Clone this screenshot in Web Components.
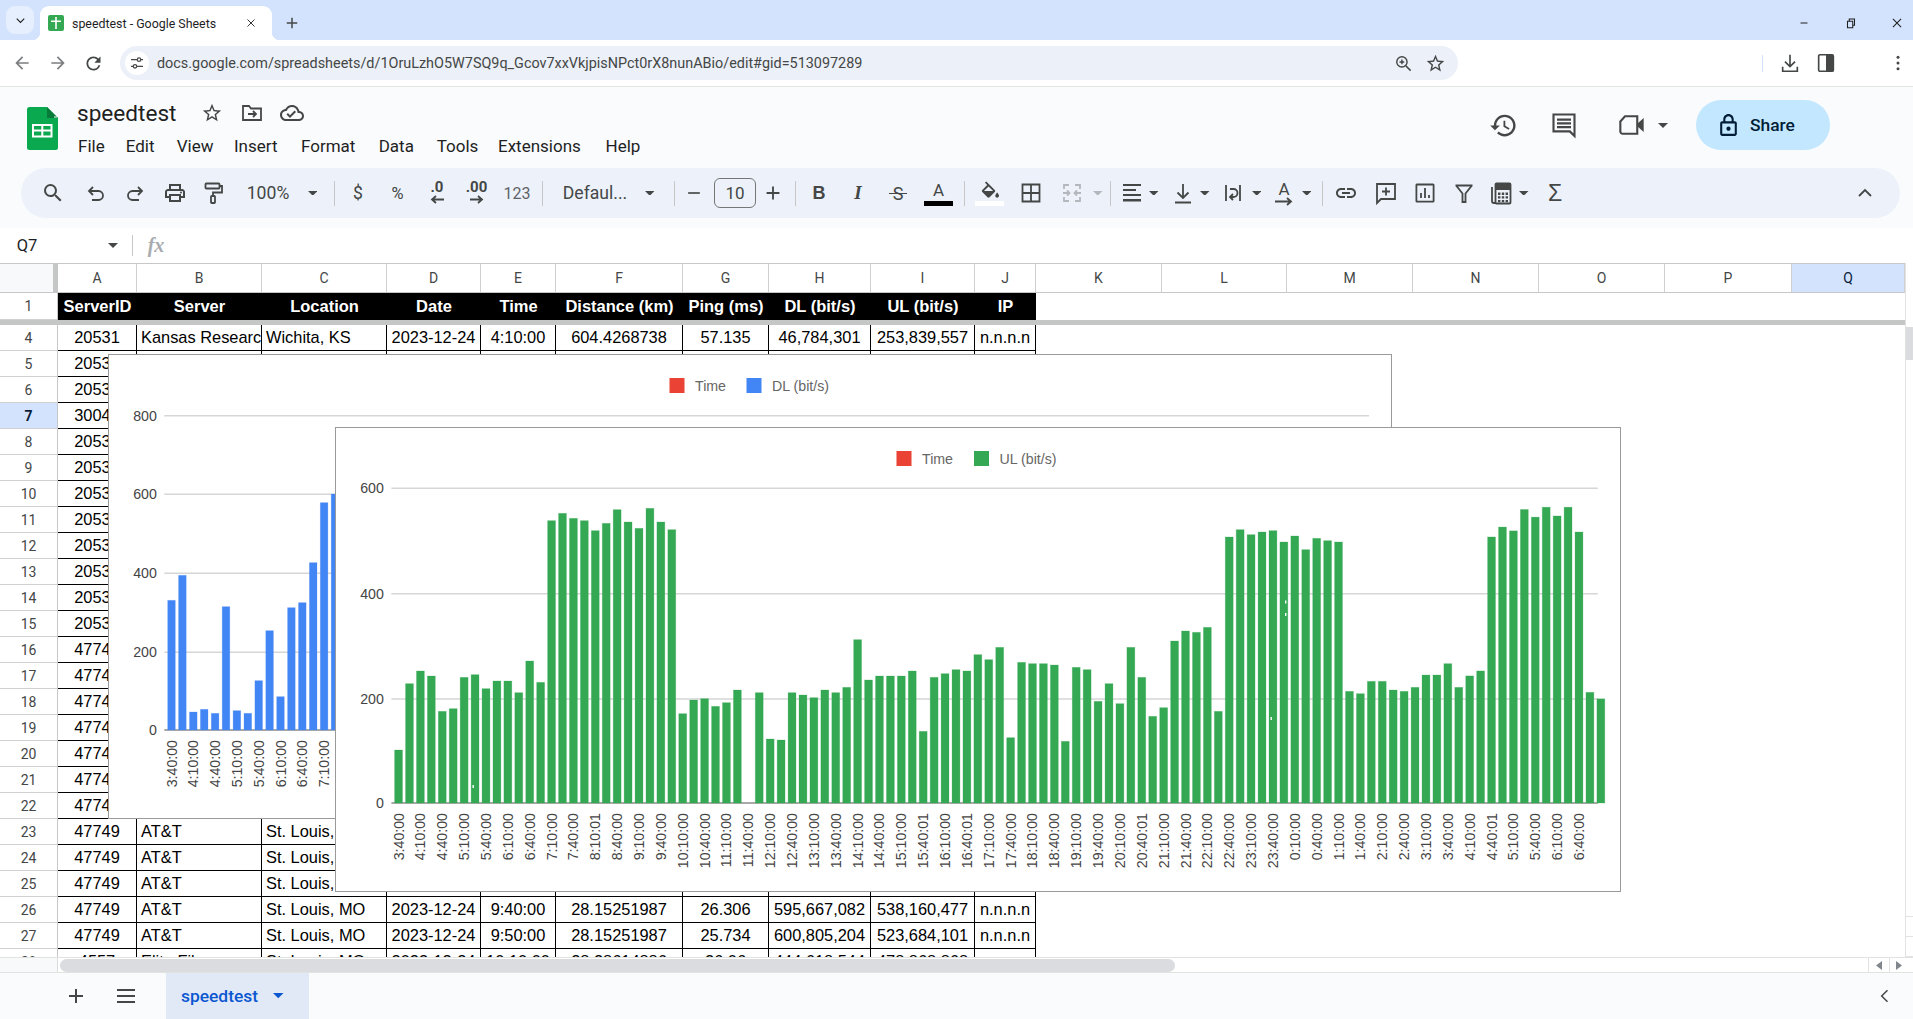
<!DOCTYPE html>
<html>
<head>
<meta charset="utf-8">
<title>speedtest - Google Sheets</title>
<style>
	html, body { margin: 0; height: 100%; overflow: hidden; background: #fff; }
	body { display: flex; flex-direction: column; width: 1913px; height: 1019px; font-family: Roboto, "Liberation Sans", sans-serif; }
	#dl { left: 108px; top: 91px; width: 1284px; height: 465px; }
	#ul { left: 335px; top: 164px; width: 1286px; height: 465px; }
</style>
</head>
<body>
<browser-chrome></browser-chrome>
<sheet-header></sheet-header>
<formula-bar></formula-bar>
<sheet-grid>
	<bar-chart id="dl"></bar-chart>
	<bar-chart id="ul"></bar-chart>
</sheet-grid>
<sheet-tabs></sheet-tabs>

<script>
const st = 'fill="none" stroke="currentColor" stroke-width="1.8"'
const ICONS = {
	search: `<path d="M15.5 14h-.79l-.28-.27A6.47 6.47 0 0 0 16 9.5 6.5 6.5 0 1 0 9.5 16c1.61 0 3.09-.59 4.23-1.57l.27.28v.79l5 4.99L20.49 19l-4.99-5zm-6 0C7.01 14 5 11.99 5 9.5S7.01 5 9.5 5 14 7.01 14 9.5 11.99 14 9.5 14z"/>`,
	undo: `<path ${st} d="M9 6 5 10l4 4M5 10h9.5a4.5 4.5 0 0 1 0 9H8"/>`,
	redo: `<path ${st} d="M15 6l4 4-4 4M19 10H9.5a4.5 4.5 0 0 0 0 9H16"/>`,
	print: `<path d="M19 8h-1V3H6v5H5c-1.66 0-3 1.34-3 3v6h4v4h12v-4h4v-6c0-1.66-1.34-3-3-3zM8 5h8v3H8V5zm8 12v2H8v-4h8v2zm2-2v-2H6v2H4v-4c0-.55.45-1 1-1h14c.55 0 1 .45 1 1v4h-2z"/><circle cx="18" cy="11.5" r="1"/>`,
	paint: `<g ${st}><rect x="4.5" y="2.5" width="14" height="5" rx=".8"/><path d="M18.5 5h2.5v6.5h-9V15"/><rect x="10" y="15" width="4" height="7" rx=".8"/></g>`,
	fill: `<path d="M16.56 8.94 7.62 0 6.21 1.41l2.38 2.38-5.15 5.15c-.59.59-.59 1.54 0 2.12l5.5 5.5c.29.29.68.44 1.06.44s.77-.15 1.06-.44l5.5-5.5c.59-.58.59-1.53 0-2.12zM5.21 10 10 5.21 14.79 10H5.21zM19 11.5s-2 2.17-2 3.5c0 1.1.9 2 2 2s2-.9 2-2c0-1.33-2-3.5-2-3.5z"/>`,
	borders: `<path ${st} d="M3.5 3.5h17v17h-17zM12 3.5v17M3.5 12h17"/>`,
	merge: `<path ${st} d="M9 4H4v4M15 4h5v4M9 20H4v-4M15 20h5v-4M3 12h6M7 9.5 9.5 12 7 14.5M21 12h-6M17 9.5 14.5 12 17 14.5"/>`,
	align: `<path d="M3 3h18v2H3zM3 8h13v2H3zM3 13h18v2H3zM3 18h18v2.4H3z"/>`,
	valign: `<path ${st} d="M12 3v14M6.5 11.5 12 17l5.5-5.5M4 21.5h16"/>`,
	wrap: `<path ${st} d="M5 4v16M19 4v16M9 8h3.5a4 4 0 0 1 0 8H9.5M12 13l-3 3 3 3"/>`,
	link: `<path d="M3.9 12c0-1.71 1.39-3.1 3.1-3.1h4V7H7c-2.76 0-5 2.24-5 5s2.24 5 5 5h4v-1.9H7c-1.71 0-3.1-1.39-3.1-3.1zM8 13h8v-2H8v2zm9-6h-4v1.9h4c1.71 0 3.1 1.39 3.1 3.1s-1.39 3.1-3.1 3.1h-4V17h4c2.76 0 5-2.24 5-5s-2.24-5-5-5z"/>`,
	comment: `<path ${st} d="M3 3h18v15H7l-4 4zM12 6.5v8M8 10.5h8"/>`,
	chart: `<path ${st} d="M4 3.5h16a.6.6 0 0 1 .6.6v16a.6.6 0 0 1-.6.6H4a.6.6 0 0 1-.6-.6V4a.6.6 0 0 1 .6-.5zM8 17v-5M12 17V7M16 17v-3"/>`,
	filter: `<path ${st} d="M3.5 4.5h17M4.5 5l6 7.5V21h3v-8.5l6-7.5"/>`,
	calc: `<path ${st} d="M3 6v14a2 2 0 0 0 2 2h1"/><rect ${st} x="6.5" y="2.5" width="15" height="20" rx="1"/><path d="M6.5 2.5h15V9h-15zM9 11.5h2.4v2.4H9zM12.8 11.5h2.4v2.4h-2.4zM16.6 11.5H19v2.4h-2.4zM9 15.2h2.4v2.4H9zM12.8 15.2h2.4v2.4h-2.4zM16.6 15.2H19v2.4h-2.4zM9 18.9h2.4v2.4H9zM12.8 18.9h2.4v2.4h-2.4zM16.6 18.9H19v2.4h-2.4z"/>`,
	star: `<path d="M22 9.24l-7.19-.62L12 2 9.19 8.63 2 9.24l5.46 4.73L5.82 21 12 17.27 18.18 21l-1.63-7.03L22 9.24zM12 15.4l-3.76 2.27 1-4.28-3.32-2.88 4.38-.38L12 6.1l1.71 4.04 4.38.38-3.32 2.88 1 4.28L12 15.4z"/>`,
	folder: `<path ${st} d="M3 5h6l2 2.5h10V19H3zM8 13h8M13 10l3 3-3 3"/>`,
	cloud: `<path d="M19.35 10.04C18.67 6.59 15.64 4 12 4 9.11 4 6.6 5.64 5.35 8.04 2.34 8.36 0 10.91 0 14c0 3.31 2.69 6 6 6h13c2.76 0 5-2.24 5-5 0-2.64-2.05-4.78-4.65-4.96zM19 18H6c-2.21 0-4-1.79-4-4 0-2.05 1.53-3.76 3.56-3.97l1.07-.11.5-.95C8.08 7.14 9.94 6 12 6c2.62 0 4.88 1.86 5.39 4.43l.3 1.5 1.53.11c1.56.1 2.78 1.41 2.78 2.96 0 1.65-1.35 3-3 3zm-9-3.82l-2.09-2.09L6.5 13.5 10 17l6.01-6.01-1.41-1.41z"/>`,
	history: `<path d="M13 3c-4.97 0-9 4.03-9 9H1l3.89 3.89.07.14L9 12H6c0-3.87 3.13-7 7-7s7 3.13 7 7-3.13 7-7 7c-1.93 0-3.68-.79-4.94-2.06l-1.42 1.42C8.27 19.99 10.51 21 13 21c4.97 0 9-4.03 9-9s-4.03-9-9-9zm-1 5v5l4.28 2.54.72-1.21-3.5-2.08V8H12z"/>`,
	chat: `<path ${st} stroke-width="2" d="M3 3h18v18.5L17 17.5H3z"/><path d="M6 6.5h12v1.8H6zM6 9.7h12v1.8H6zM6 12.9h12v1.8H6z"/>`,
	meet: `<path ${st} stroke-width="2.2" d="M2 9l4-4.5h10.5V19.5H4a2 2 0 0 1-2-2z"/><path d="M17 10.5 22 6v12l-5-4.5z"/>`,
	lock: `<path d="M18 8h-1V6c0-2.76-2.24-5-5-5S7 3.24 7 6v2H6c-1.1 0-2 .9-2 2v10c0 1.1.9 2 2 2h12c1.1 0 2-.9 2-2V10c0-1.1-.9-2-2-2zM9 6c0-1.66 1.34-3 3-3s3 1.34 3 3v2H9V6zm9 14H6V10h12v10zm-6-3c1.1 0 2-.9 2-2s-.9-2-2-2-2 .9-2 2 .9 2 2 2z"/>`,
	back: `<path d="M20 11H7.83l5.59-5.59L12 4l-8 8 8 8 1.41-1.41L7.83 13H20v-2z"/>`,
	forward: `<path d="M4 11h12.17l-5.59-5.59L12 4l8 8-8 8-1.41-1.41L16.17 13H4v-2z"/>`,
	reload: `<path d="M17.65 6.35A7.958 7.958 0 0 0 12 4c-4.42 0-7.99 3.58-7.99 8s3.57 8 7.99 8c3.73 0 6.84-2.55 7.73-6h-2.08A5.99 5.99 0 0 1 12 18c-3.31 0-6-2.69-6-6s2.69-6 6-6c1.66 0 3.14.69 4.22 1.78L13 11h7V4l-2.35 2.35z"/>`,
	tune: `<path ${st} d="M3 7h9M18 7h3M3 17h3M12 17h9"/><circle ${st} cx="15" cy="7" r="2.6"/><circle ${st} cx="9" cy="17" r="2.6"/>`,
	zoom: `<path ${st} stroke-width="2" d="M15 15l6 6"/><circle ${st} stroke-width="2" cx="10" cy="10" r="6.5"/><path ${st} stroke-width="1.6" d="M10 7v6M7 10h6"/>`,
	download: `<path ${st} stroke-width="2" d="M12 3v13M6.5 10.5 12 16l5.5-5.5M4 16v5h16v-5"/>`,
	panel: `<rect ${st} stroke-width="2" x="4" y="3" width="16" height="18" rx="1.5"/><path d="M12 3h8v18h-8z"/>`,
	dots: `<circle cx="12" cy="5" r="1.8"/><circle cx="12" cy="12" r="1.8"/><circle cx="12" cy="19" r="1.8"/>`,
	plus: `<path d="M19 13h-6v6h-2v-6H5v-2h6V5h2v6h6v2z"/>`,
	minus: `<path d="M5 11h14v2H5z"/>`,
	menu: `<path d="M3 5h18v2H3zM3 11h18v2H3zM3 17h18v2H3z"/>`,
	chevup: `<path ${st} stroke-width="2" d="M6 15l6-6 6 6"/>`,
	chevleft: `<path ${st} stroke-width="2.4" d="M15 5l-7 7 7 7"/>`,
	chevdown: `<path ${st} stroke-width="2.4" d="M6 9l6 6 6-6"/>`,
	x: `<path ${st} stroke-width="2" d="M5 5l14 14M19 5 5 19"/>`,
	restore: `<path ${st} stroke-width="1.6" d="M6 9h9v11H6zM9 9V5h9v11h-3"/>`,
	larr: `<path d="M12 2v2H3.8l3 3L5.4 8.4 0 3 5.4-2.4" transform="translate(2 2)"/>`
}
const ic = (name, size = 24, extra = '') => `<svg width="${size}" height="${size}" viewBox="0 0 24 24" fill="currentColor" ${extra}>${ICONS[name]}</svg>`
const drop = (w = 10, color = 'currentColor') => `<svg width="${w}" height="${w / 2}" viewBox="0 0 10 5" fill="${color}"><path d="M0 0h10L5 5z"/></svg>`

// items are [centre x, width, html, class], laid out as a flex row of slots
function place(items, origin = 0) {
	let cur = origin
	return items.map(([c, w, html = '', cls = '']) => {
		const l = c - w / 2
		const m = l - cur
		cur = l + w
		return `<span class="slot ${cls}" style="margin-left:${m}px;width:${w}px">${html}</span>`
	}).join('')
}
const slotCss = `
	.slot { flex: none; display: flex; align-items: center; justify-content: center; white-space: nowrap; }
	svg { display: block; flex: none; }
`

class BrowserChrome extends HTMLElement {
	constructor() {
		super()
		this.attachShadow({mode: 'open'})
		this.shadowRoot.innerHTML = `
		<style>
			:host { display: block; flex: none; font-family: Roboto, "Liberation Sans", sans-serif; }
			${slotCss}
			#strip { height: 40px; background: #d3e3fd; display: flex; }
			#strip .slot { height: 34px; margin-top: 6px; color: #1f1f1f; }
			#strip .list { height: 28px; background: #e6effd; border-radius: 9px; }
			#strip .tab { background: #fff; border-radius: 9px 9px 0 0; justify-content: flex-start; position: relative; font-size: 12.4px; }
			.tab::before, .tab::after { content: ''; position: absolute; bottom: 0; width: 8px; height: 8px; background: radial-gradient(circle at 0 0, transparent 8px, #fff 8.5px); }
			.tab::before { left: -8px; }
			.tab::after { right: -8px; background: radial-gradient(circle at 100% 0, transparent 8px, #fff 8.5px); }
			#title { margin-left: 8px; width: 173px; overflow: hidden; }
			#x { color: #1f1f1f; }
			#bar { height: 46px; background: #fff; border-bottom: 1px solid #e0e3df; display: flex; align-items: flex-start; }
			#bar .slot { height: 34px; margin-top: 6px; color: #444746; }
			#bar .back, #bar .forward { color: #7c7e80; }
			#omni { background: #ecf0f8; border-radius: 17px; justify-content: flex-start; }
			#site { width: 24px; height: 24px; border-radius: 50%; background: #fff; margin-left: 5px; display: flex; align-items: center; justify-content: center; color: #444746; flex: none; }
			#url { margin-left: 8px; font-size: 14.4px; color: #444746; }
			#omni .end { margin-left: auto; display: flex; align-items: center; gap: 12px; margin-right: 12px; color: #444746; }
			#bar .sep { height: 17px; margin-top: 15px; background: #d3e3fd; }
		</style>
		<div id="strip">
			${place([
				[20, 28, ic('chevdown', 15), 'list'],
				[156, 232, `<svg width="16" height="16" viewBox="0 0 16 16" style="margin-left:8px"><rect width="16" height="16" rx="2" fill="#34a853"/><path d="M7.2 2h1.6v12H7.2zM3 5.5h10v1.5H3z" fill="#fff"/></svg><span id="title">speedtest - Google Sheets</span><span id="x">${ic('x', 12)}</span>`, 'tab'],
				[292, 20, ic('plus', 18, 'style="color:#444746"')],
				[1804, 16, ic('minus', 12)],
				[1850.5, 16, ic('restore', 14)],
				[1896.5, 16, ic('x', 14)]
			])}
		</div>
		<div id="bar">
			${place([
				[21.5, 30, ic('back', 20), 'back'],
				[58, 30, ic('forward', 20), 'forward'],
				[93.7, 30, ic('reload', 21)],
				[789, 1338, `<span id="site">${ic('tune', 16)}</span><span id="url">docs.google.com/spreadsheets/d/1OruLzhO5W7SQ9q_Gcov7xxVkjpisNPct0rX8nunABio/edit#gid=513097289</span><span class="end">${ic('zoom', 19)}${ic('star', 21)}</span>`, ''],
				[1762.5, 1, '', 'sep'],
				[1790, 26, ic('download', 22)],
				[1826.5, 26, ic('panel', 22)],
				[1898, 26, ic('dots', 20)]
			])}
		</div>`
		this.shadowRoot.querySelectorAll('#bar .slot')[3].id = 'omni'
	}
}
customElements.define('browser-chrome', BrowserChrome)

class SheetToolbar extends HTMLElement {
	constructor() {
		super()
		this.attachShadow({mode: 'open'})
		const sep = c => [c, 1, '', 'sep']
		const dropAt = c => [c, 12, drop(9.5)]
		const under = (color, inner) => `<span class="col">${inner}<i class="bar" style="background:${color}"></i></span>`
		const dec = (t, d) => `<span class="dec"><span>${t}</span><svg width="15" height="9" viewBox="0 0 15 9" fill="none" stroke="currentColor" stroke-width="1.8"><path d="${d}"/></svg></span>`
		this.shadowRoot.innerHTML = `
		<style>
			:host { display: flex; align-items: center; height: 50px; margin: 0 13px 10px 21px; background: #edf2fa; border-radius: 25px; color: #444746; font-size: 17.6px; flex: none; }
			${slotCss}
			.slot { height: 50px; }
			.sep { height: 25px; background: #c7c7c7; }
			.off { color: #b4b8bc; }
			.num { font-size: 16px; color: #5f6368; }
			.box { height: 30px !important; border: 1px solid #747775; border-radius: 6px; box-sizing: border-box; font-size: 17px; }
			.col { display: flex; flex-direction: column; align-items: center; }
			.a { font-size: 17px; line-height: 18px; margin-bottom: 2px; }
			.bar { display: block; width: 29px; height: 5px; }
			.dec { display: flex; flex-direction: column; align-items: center; font-weight: 700; font-size: 15px; line-height: 15px; margin-top: -2px; }
			.b { font-weight: 700; font-size: 18px; font-family: "Liberation Sans", sans-serif; }
			.i { font-weight: 700; font-style: italic; font-size: 19px; font-family: "Liberation Serif", serif; }
			.s { position: relative; font-size: 18px; }
			.s::after { content: ''; position: absolute; left: -4px; right: -4px; top: 10px; height: 1.6px; background: #444746; }
			.sig { font-size: 23px; font-family: "Liberation Sans", sans-serif; }
			.rot { font-size: 17px; line-height: 16px; }
		</style>
		${place([
			[53, 26, ic('search')],
			[96, 26, ic('undo')],
			[135, 26, ic('redo')],
			[175, 26, ic('print')],
			[213, 26, ic('paint')],
			[268, 50, '100%'],
			dropAt(312.5),
			sep(334),
			[358, 16, '$'],
			[397.5, 20, '<span style="font-size:16.5px">%</span>'],
			[437, 24, dec('.0', 'M14 4.5H2M6 1 2 4.5 6 8')],
			[476.5, 28, dec('.00', 'M1 4.5h12M9 1l4 3.5L9 8')],
			[517, 30, '123', 'num'],
			sep(542.5),
			[595, 68, 'Defaul...'],
			dropAt(650),
			sep(674),
			[694, 22, ic('minus', 20)],
			[735, 42, '10', 'box'],
			[773, 22, ic('plus', 22)],
			sep(795),
			[819, 22, '<span class="b">B</span>'],
			[858, 22, '<span class="i">I</span>'],
			[898, 26, '<span class="s">S</span>'],
			[938.5, 30, under('#000', '<span class="a">A</span>')],
			sep(964),
			[989.5, 30, under('#fff', `<svg width="21" height="18" viewBox="0 0 22 18" fill="currentColor" style="margin-bottom:2px">${ICONS.fill}</svg>`)],
			[1030.5, 24, ic('borders')],
			[1071.5, 24, ic('merge'), 'off'],
			[1098, 12, drop(9.5), 'off'],
			sep(1110),
			[1132, 24, ic('align')],
			dropAt(1154),
			[1182.5, 24, ic('valign')],
			dropAt(1205),
			[1233, 24, ic('wrap')],
			dropAt(1256.5),
			[1284, 24, `<span class="col"><span class="rot">A</span><svg width="20" height="9" viewBox="0 0 20 9" fill="none" stroke="currentColor" stroke-width="1.8"><path d="M1 4.5h16M13 1l4 3.5L13 8"/></svg></span>`],
			dropAt(1306.5),
			sep(1322.5),
			[1346, 24, ic('link')],
			[1385.5, 24, ic('comment')],
			[1425, 24, ic('chart')],
			[1464, 24, ic('filter')],
			[1501, 24, ic('calc')],
			dropAt(1524),
			[1555, 22, '<span class="sig">Σ</span>'],
			[1865, 26, ic('chevup')]
		], 21)}`
	}
}
customElements.define('sheet-toolbar', SheetToolbar)

class SheetHeader extends HTMLElement {
	constructor() {
		super()
		this.attachShadow({mode: 'open'})
		const menu = [['File', 47.7], ['Edit', 51], ['View', 57.3], ['Insert', 67], ['Format', 77.7], ['Data', 58], ['Tools', 61.3], ['Extensions', 107.6], ['Help', 50]]
		this.shadowRoot.innerHTML = `
		<style>
			:host { display: block; flex: none; height: 141px; background: #f9fbfd; color: #444746; font-family: Roboto, "Liberation Sans", sans-serif; }
			${slotCss}
			#top { height: 81px; display: flex; }
			#logo { flex: none; margin: 20px 19px 0 27px; }
			#names { flex: none; width: 720px; }
			#title { display: flex; align-items: center; height: 32px; margin-top: 10px; }
			#name { font-size: 22.6px; color: #1f1f1f; width: 102px; margin-right: 0; }
			#title .slot { height: 32px; }
			#menu { display: flex; margin-left: 1px; height: 24px; line-height: 24px; margin-top: 5px; font-size: 17px; color: #1f1f1f; }
			#menu span { flex: none; }
			#right { display: flex; align-items: flex-start; flex: none; }
			#right .slot { height: 50px; margin-top: 13px; }
			#share { background: #c2e7ff; color: #001d35; border-radius: 25px; justify-content: flex-start !important; font-size: 17.4px; font-weight: 500; gap: 9px; padding-left: 20px; box-sizing: border-box; }
		</style>
		<div id="top">
			<svg id="logo" width="31" height="43" viewBox="0 0 31 43"><path d="M2.5 0H20l11 11v29.5a2.5 2.5 0 0 1-2.5 2.5h-26A2.5 2.5 0 0 1 0 40.5v-38A2.5 2.5 0 0 1 2.5 0z" fill="#0aa84f"/><path d="M20 0l11 11H20z" fill="#087a3a"/><path d="M27 9.5h3v1h-3z" fill="#fff"/><path d="M5 17h20.5v13.5H5zM7 19v3.6h7.3V19zm9.3 0v3.6h7.2V19zM7 24.6v3.9h7.3v-3.9zm9.3 0v3.9h7.2v-3.9z" fill="#fff" fill-rule="evenodd"/></svg>
			<div id="names">
				<div id="title">
					<span id="name">speedtest</span>
					${place([[212, 24, ic('star', 22)], [252, 24, ic('folder', 24)], [292, 24, ic('cloud', 24)]], 178.7)}
				</div>
				<div id="menu">${menu.map(([t, w]) => `<span style="width:${w}px">${t}</span>`).join('')}</div>
			</div>
			<div id="right">
				${place([
					[1503, 30, ic('history', 29)],
					[1564, 30, ic('chat', 28)],
					[1632, 30, ic('meet', 28)],
					[1662.5, 12, drop(10)],
					[1763, 134, `${ic('lock', 25)}<span>Share</span>`, 'share']
				], 797)}
			</div>
		</div>
		<sheet-toolbar></sheet-toolbar>`
		this.shadowRoot.querySelector('.share').id = 'share'
	}
}
customElements.define('sheet-header', SheetHeader)

class FormulaBar extends HTMLElement {
	constructor() {
		super()
		this.attachShadow({mode: 'open'})
		this.shadowRoot.innerHTML = `
		<style>
			:host { display: flex; flex: none; height: 35px; align-items: center; background: #fff; font-family: Roboto, "Liberation Sans", sans-serif; color: #1f1f1f; }
			${slotCss}
			.sep { height: 21px; background: #c7c7c7; }
			#ref { font-size: 16.5px; }
			#fx { font-family: "Liberation Serif", serif; font-style: italic; font-weight: 700; font-size: 20px; color: #a9acaf; }
		</style>
		${place([
			[27, 20, '<span id="ref">Q7</span>'],
			[112.5, 12, drop(10, '#444746')],
			[132, 1, '', 'sep'],
			[156, 24, '<span id="fx">fx</span>']
		])}`
	}
}
customElements.define('formula-bar', FormulaBar)

const colEdges = [58, 137, 262, 387, 481, 556, 683, 769, 871, 975, 1036, 1162, 1287, 1413, 1539, 1665, 1792, 1905]
const colNames = 'ABCDEFGHIJKLMNOPQ'.split('')
const heads = ['ServerID', 'Server', 'Location', 'Date', 'Time', 'Distance (km)', 'Ping (ms)', 'DL (bit/s)', 'UL (bit/s)', 'IP']
const stl = ['47749', 'AT&T', 'St. Louis, MO']
const rows = {
	4: ['20531', 'Kansas Research', 'Wichita, KS', '2023-12-24', '4:10:00', '604.4268738', '57.135', '46,784,301', '253,839,557', 'n.n.n.n'],
	7: ['30041'],
	23: stl, 24: stl, 25: stl,
	26: [...stl, '2023-12-24', '9:40:00', '28.15251987', '26.306', '595,667,082', '538,160,477', 'n.n.n.n'],
	27: [...stl, '2023-12-24', '9:50:00', '28.15251987', '25.734', '600,805,204', '523,684,101', 'n.n.n.n'],
	28: ['4557', 'Elite Fiber', 'St. Louis, MO', '2023-12-24', '10:10:00', '28.28614886', '26.06', '444,618,544', '478,868,868', '']
}
for (let r = 5; r <= 22; r++) if (!rows[r]) rows[r] = [(r < 16 ? '20531' : '47749')]

class SheetGrid extends HTMLElement {
	constructor() {
		super()
		this.attachShadow({mode: 'open'})
		const widths = colEdges.map((e, i) => i ? e - colEdges[i - 1] : e)
		let html = `<div class="corner"></div>`
		colNames.forEach((c, i) => html += `<div class="colh ${c == 'Q' ? 'sel' : ''}">${c}</div>`)
		html += `<div class="rowh">1</div>`
		colNames.forEach((c, i) => html += i < 10 ? `<div class="hd">${heads[i]}</div>` : `<div></div>`)
		html += `<div class="freeze"></div>`
		for (let r = 4; r <= 28; r++) {
			html += `<div class="rowh ${r == 7 ? 'sel' : ''}">${r}</div>`
			colNames.forEach((c, i) => {
				if (i >= 10) { html += `<div></div>`; return }
				html += `<div class="cell ${i == 1 || i == 2 ? 'left' : ''}">${(rows[r][i] || '').replace('&', '&amp;')}</div>`
			})
		}
		this.shadowRoot.innerHTML = `
		<style>
			:host { display: block; flex: none; height: 710px; position: relative; background: #fff; }
			#main { display: flex; height: 694px; }
			#view { position: relative; width: 1905px; height: 694px; overflow: hidden; flex: none; }
			#table { display: grid; grid-template-columns: ${widths.map(w => w + 'px').join(' ')}; grid-template-rows: 30px 27px 5px repeat(25, 26px); font-family: "Liberation Sans", Arial, sans-serif; font-size: 16.4px; color: #000; }
			#table > div { box-sizing: border-box; min-width: 0; overflow: hidden; white-space: nowrap; }
			.corner { background: #f8f9fa; border-top: 1px solid #c7c7c7; border-bottom: 1px solid #c7c7c7; border-right: 5px solid #c4c7c5; }
			.colh, .rowh { font-family: Roboto, sans-serif; font-size: 14px; color: #444746; display: flex; align-items: center; justify-content: center; }
			.colh { border-top: 1px solid #c7c7c7; border-bottom: 1px solid #c7c7c7; border-right: 1px solid #d0d0d0; background: #fff; }
			.rowh { border-bottom: 1px solid #d0d0d0; border-right: 1px solid #c7c7c7; background: #fff; }
			.sel { background: #d3e3fd !important; color: #0b1d3a; }
			.rowh.sel { font-weight: 700; }
			.hd { background: #000; color: #fff; font-weight: 700; text-align: center; line-height: 26px; font-size: 16.5px; }
			.freeze { grid-column: 1 / -1; background: #c4c7c5; }
			.cell { border-right: 1px solid #000; border-bottom: 1px solid #000; text-align: center; line-height: 25px; padding: 0 1px; }
			.left { text-align: left; padding-left: 4px; }
			.rowh + .cell { border-left: 0; }
			#vbar { flex: none; width: 8px; border-left: 1px solid #e1e3e1; box-sizing: border-box; display: flex; flex-direction: column; background: #fff; }
			#vthumb { margin-top: 64px; height: 33px; background: #dadce0; }
			#vends { margin-top: auto; height: 40px; border-top: 1px solid #e1e3e1; display: flex; flex-direction: column; }
			#vends span { flex: 1; border-bottom: 1px solid #e1e3e1; position: relative; overflow: hidden; }
			#hbar { height: 16px; box-sizing: border-box; border-top: 1px solid #e1e3e1; border-bottom: 1px solid #e1e3e1; display: flex; align-items: center; background: #fff; }
			#hcorner { flex: none; width: 58px; height: 100%; background: #f8f9fa; border-right: 1px solid #dcdcdc; box-sizing: border-box; }
			#hthumb { flex: none; margin-left: 2px; width: 1115px; height: 13px; background: #dadce0; border-radius: 7px; }
			#harrows { margin-left: auto; display: flex; height: 100%; margin-right: 0; color: #80868b; }
			#harrows span { width: 20px; display: flex; align-items: center; justify-content: center; border-left: 1px solid #e1e3e1; }
			#harrows span:last-child { width: 24px; justify-content: flex-start; padding-left: 6px; box-sizing: border-box; }
		</style>
		<div id="main">
			<div id="view">
				<div id="table">${html}</div>
				<slot></slot>
			</div>
			<div id="vbar"><div id="vthumb"></div><div id="vends"><span></span><span></span></div></div>
		</div>
		<div id="hbar">
			<div id="hcorner"></div><div id="hthumb"></div>
			<div id="harrows">
				<span><svg width="6" height="9" viewBox="0 0 6 9" fill="currentColor"><path d="M6 0v9L0 4.5z"/></svg></span>
				<span><svg width="6" height="9" viewBox="0 0 6 9" fill="currentColor"><path d="M0 0v9l6-4.5z"/></svg></span>
			</div>
		</div>`
	}
}
customElements.define('sheet-grid', SheetGrid)

class BarChart extends HTMLElement {
	constructor() {
		super()
		this.attachShadow({mode: 'open'})
	}

	// everything in the config is in page pixels, the viewBox does the shifting
	set config(c) {
		const r = this.getBoundingClientRect()
		const ox = c.left, oy = c.top
		let s = ''
		c.grid.forEach(([y, label]) => {
			s += `<line x1="${c.plotLeft}" x2="${c.plotRight}" y1="${y}" y2="${y}" stroke="${label == '0' ? '#555' : '#d6d6d6'}" stroke-width="${label == '0' ? 1.2 : 1.6}"/>`
			s += `<text x="${c.plotLeft - 7.5}" y="${y}" text-anchor="end" dominant-baseline="central" fill="#444">${label}</text>`
		})
		c.heights.forEach((h, i) => {
			if (h < 1) return
			const x = c.firstBar + i * c.step
			s += `<rect x="${x}" y="${c.zero - h}" width="${c.barWidth}" height="${h}" fill="${c.color}" stroke="${c.color}" stroke-opacity=".3" stroke-width=".8"/>`
		})
		c.labels.forEach((t, i) => {
			const x = c.firstBar + c.barWidth / 2 + i * 2 * c.step
			s += `<text x="${x}" y="${c.labelTop}" text-anchor="end" dominant-baseline="central" fill="#444" transform="rotate(-90 ${x} ${c.labelTop})">${t}</text>`
		})
		c.legend.forEach(([x, color, t]) => {
			s += `<rect x="${x}" y="${c.legendY - 7.5}" width="15" height="15" fill="${color}"/>`
			s += `<text x="${x + 25.5}" y="${c.legendY}" dominant-baseline="central" fill="#666">${t}</text>`
		})
		;(c.specks || []).forEach(([x, y]) => s += `<rect x="${x}" y="${y}" width="1.4" height="3" fill="#fff"/>`)
		this.shadowRoot.innerHTML = `
		<style>
			:host { display: block; position: absolute; background: #fff; border: 1px solid #9a9a9a; box-sizing: border-box; overflow: hidden; }
			svg { display: block; font: 14.2px "Liberation Sans", Arial, sans-serif; }
		</style>
		<svg width="${c.width}" height="${c.height}" viewBox="${ox} ${oy} ${c.width} ${c.height}">${s}</svg>`
	}
}
customElements.define('bar-chart', BarChart)

class SheetTabs extends HTMLElement {
	constructor() {
		super()
		this.attachShadow({mode: 'open'})
		this.shadowRoot.innerHTML = `
		<style>
			:host { display: flex; flex: none; height: 46px; background: #f9fbfd; color: #444746; font-family: Roboto, "Liberation Sans", sans-serif; }
			${slotCss}
			#tab { height: 46px; background: #e1e9f7; color: #0b57d0; font-weight: 500; font-size: 17.4px; justify-content: flex-start; padding-left: 15px; box-sizing: border-box; gap: 15px; }
			.slot { height: 46px; }
		</style>
		${place([
			[76, 24, ic('plus', 24)],
			[126, 24, ic('menu', 24)],
			[237.5, 143, `<span>speedtest</span>${drop(10.5, '#0b57d0')}`, 'ti'],
			[1885, 24, ic('chevleft', 20)]
		])}`
		this.shadowRoot.querySelector('.ti').id = 'tab'
	}
}
customElements.define('sheet-tabs', SheetTabs)

// bar tops measured off the reference crops (y in crop pixels, scale 3 and 2.62)
const ulTops3 = [990,791,753,768,874,866,772,764,806,783,783,818,723,787,302,280,295,302,332,310,269,306,325,265,306,329,881,840,836,859,848,810,1148,818,957,960,818,825,833,810,818,802,659,780,768,
	768,768,753,934,772,761,749,753,704,719,682,953,727,731,731,735,964,742,749,844,791,851,682,772,889,863,663,633,637,622,874,351,329,344,336,332,366,348,389,355,362,366,814,821,784,784,810,814,802,765,765,731]
const ulTops262 = [700,670,657,306,280,290,234,254,228,251,228,293,713,730]
const ulHeights = [...ulTops3.map(y => (1149 - y) / 3), ...ulTops262.map(y => (1003 - y) / 2.62)]
const dlHeights = [601,526,936,928,940,620,932,940,842,692,890,623,608,488,308,282].map(y => (990 - y) / 3)

const t = m => m + ':00'
const ulLabels = ['3:40','4:10','4:40','5:10','5:40','6:10','6:40','7:10','7:40','8:10:01','8:40','9:10','9:40','10:10','10:40','11:10','11:40','12:10','12:40','13:10','13:40','14:10','14:40','15:10','15:40:01','16:10','16:40:01','17:10','17:40','18:10','18:40','19:10','19:40','20:10','20:40:01','21:10','21:40','22:10','22:40','23:10','23:40','0:10','0:40','1:10','1:40','2:10','2:40','3:10','3:40','4:10','4:40:01','5:10','5:40','6:10','6:40']
	.map(l => l.length > 5 ? l : t(l))

document.getElementById('dl').config = {
	left: 109, top: 355, width: 1282, height: 463,
	plotLeft: 164.3, plotRight: 1369, zero: 730,
	grid: [[415.7, '800'], [494.3, '600'], [573.3, '400'], [652.3, '200'], [730, '0']],
	firstBar: 167.7, step: 10.9, barWidth: 7.6, color: '#4285f4', heights: dlHeights,
	labels: ['3:40', '4:10', '4:40', '5:10', '5:40', '6:10', '6:40', '7:10'].map(t), labelTop: 740,
	legendY: 385.5, legend: [[669.5, '#ea4335', 'Time'], [746.5, '#4285f4', 'DL (bit/s)']]
}
document.getElementById('ul').config = {
	left: 336, top: 428, width: 1284, height: 463,
	plotLeft: 391.4, plotRight: 1597.8, zero: 803,
	grid: [[488.3, '600'], [593.7, '400'], [699, '200'], [803, '0']],
	firstBar: 394.6, step: 10.93, barWidth: 7.9, color: '#34a853', heights: ulHeights,
	labels: ulLabels, labelTop: 813,
	legendY: 458.5, legend: [[896.5, '#ea4335', 'Time'], [974, '#34a853', 'UL (bit/s)']],
	specks: [[1285, 600.5], [1285, 613], [1270.5, 717], [472.5, 785]]
}
</script>
</body>
</html>
